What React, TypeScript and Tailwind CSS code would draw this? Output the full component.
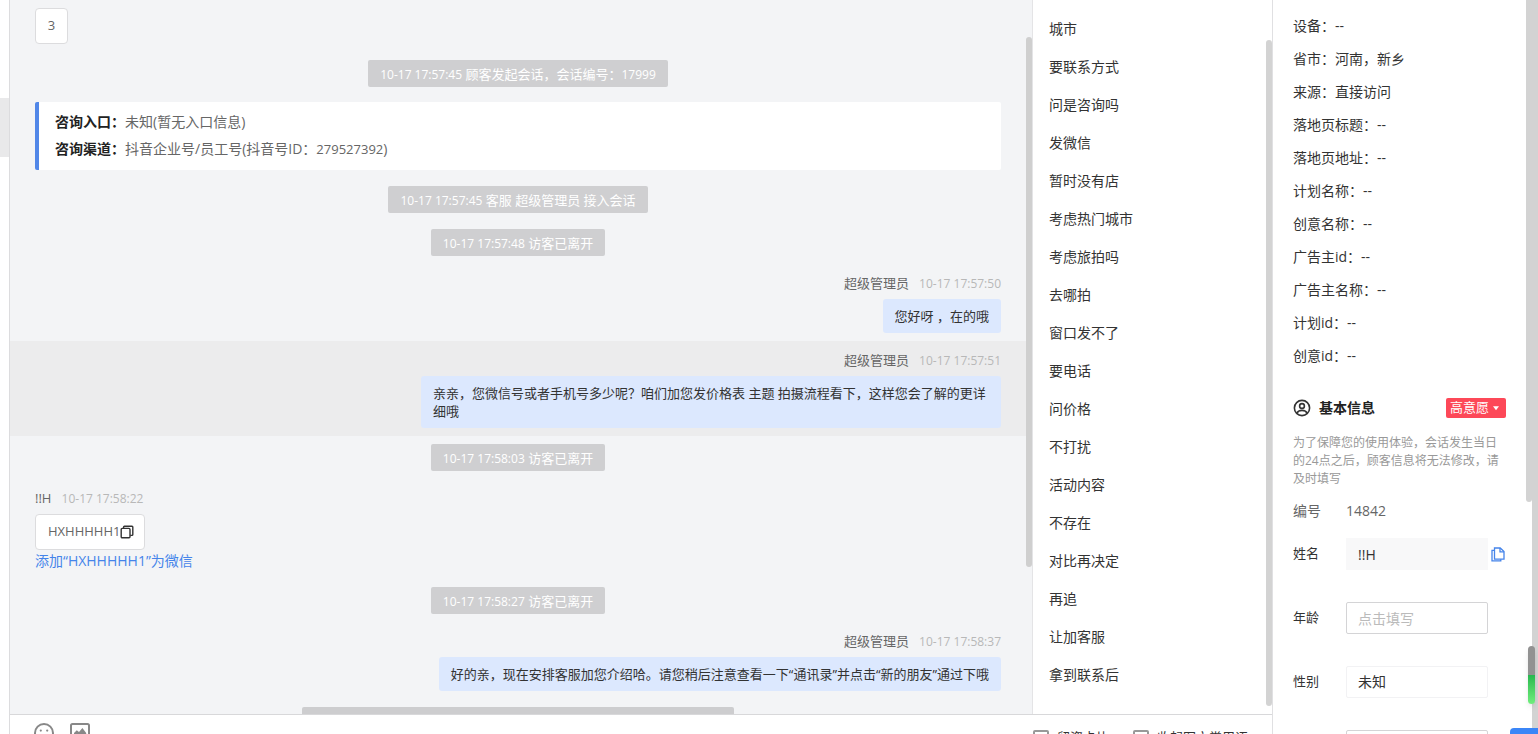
import type { ReactNode } from "react";

const quickReplies = [
  "城市", "要联系方式", "问是咨询吗", "发微信", "暂时没有店", "考虑热门城市",
  "考虑旅拍吗", "去哪拍", "窗口发不了", "要电话", "问价格", "不打扰",
  "活动内容", "不存在", "对比再决定", "再追", "让加客服", "拿到联系后",
];

const visitorInfo: [string, string][] = [
  ["设备", "--"],
  ["省市", "河南，新乡"],
  ["来源", "直接访问"],
  ["落地页标题", "--"],
  ["落地页地址", "--"],
  ["计划名称", "--"],
  ["创意名称", "--"],
  ["广告主id", "--"],
  ["广告主名称", "--"],
  ["计划id", "--"],
  ["创意id", "--"],
];

function Notice({ time, children }: { time: string; children: ReactNode }) {
  return (
    <div className="flex justify-center py-2">
      <p className="h-[27px] rounded-xs bg-[#cfcfd1] px-3 text-[13px] leading-[28px] text-white">
        <time className="text-xs">{time}</time> {children}
      </p>
    </div>
  );
}

function Sent({ time, active, children }: { time: string; active?: boolean; children: ReactNode }) {
  return (
    <div className={active ? "flex flex-col items-end bg-[#ececed] px-[25px] py-2" : "flex flex-col items-end px-[25px] py-2"}>
      <div className="mb-[3px] flex h-6 items-center gap-2 text-[13px] text-[#666]">
        超级管理员 <time className="w-21 text-right text-xs text-[#b8b8b8]">{time}</time>
      </div>
      <p className="max-w-[580px] rounded-[3px] bg-[#dce8fe] px-3 py-2 text-[13px] leading-[18px] text-[#333]">{children}</p>
    </div>
  );
}

function CopyIcon() {
  return (
    <svg viewBox="0 0 14 14" className="size-3.5" fill="none" stroke="#333" strokeWidth="1.4">
      <rect x="1.2" y="3.4" width="8.8" height="9.4" rx="1" />
      <path d="M3.6 3.2V2a.8.8 0 0 1 .8-.8H12a.8.8 0 0 1 .8.8v7.6a.8.8 0 0 1-.8.8h-1.8" />
    </svg>
  );
}

function Field({ id, label, children }: { id: string; label: string; children: ReactNode }) {
  return (
    <div className="flex h-8 items-center">
      <label htmlFor={id} className="w-[53px] shrink-0 text-[13px]">{label}</label>
      {children}
    </div>
  );
}

function Chat() {
  return (
    <main className="flex min-w-0 flex-1 bg-[#f3f4f6]">
      <div className="relative min-w-0 flex-1 overflow-hidden">
        <div className="px-[25px] pt-2">
          <p className="mb-2 flex h-9 w-[33px] items-center justify-center rounded-sm border border-[#dcdcde] bg-white text-[13px] text-[#666]">3</p>
        </div>
        <Notice time="10-17 17:57:45">顾客发起会话，会话编号：<span className="text-xs">17999</span></Notice>
        <div className="px-[25px] pt-[7px] pb-2">
          <dl className="h-[68px] rounded-xs border-l-4 border-[#5187e8] bg-white px-4 py-1.5 text-sm leading-[27px]">
            <div className="flex">
              <dt className="font-bold text-[#222]">咨询入口：</dt>
              <dd className="text-[#666]">未知(暂无入口信息)</dd>
            </div>
            <div className="flex">
              <dt className="font-bold text-[#222]">咨询渠道：</dt>
              <dd className="text-[#666]">抖音企业号/员工号(抖音号ID：<span className="text-[13px]">279527392</span>)</dd>
            </div>
          </dl>
        </div>
        <Notice time="10-17 17:57:45">客服 超级管理员 接入会话</Notice>
        <Notice time="10-17 17:57:48">访客已离开</Notice>
        <Sent time="10-17 17:57:50">您好呀 ，在的哦</Sent>
        <Sent time="10-17 17:57:51" active>
          亲亲，您微信号或者手机号多少呢？咱们加您发价格表 主题 拍摄流程看下，这样您会了解的更详细哦
        </Sent>
        <Notice time="10-17 17:58:03">访客已离开</Notice>
        <div className="flex flex-col items-start px-[25px] py-2">
          <div className="mb-[3px] flex h-6 items-center gap-2 text-[13px] text-[#666]">
            !!H <time className="w-21 text-right text-xs text-[#b8b8b8]">10-17 17:58:22</time>
          </div>
          <p className="flex h-9 items-center rounded-sm border border-[#dcdcde] bg-white pr-2.5 pl-3 text-[13px] text-[#666]">
            HXHHHHH1
            <button type="button" aria-label="复制"><CopyIcon /></button>
          </p>
          <a href="#wechat" className="text-sm leading-[21px] text-[#4584ea]">添加“HXHHHHH1”为微信</a>
        </div>
        <Notice time="10-17 17:58:27">访客已离开</Notice>
        <Sent time="10-17 17:58:37">好的亲，现在安排客服加您介绍哈。请您稍后注意查看一下“通讯录”并点击“新的朋友”通过下哦</Sent>
        <div className="absolute bottom-0 left-[292px] h-[7px] w-[432px] rounded-t-xs bg-[#cdcdcf]" />
      </div>
      <div className="w-1.5 shrink-0 pt-[37px]">
        <div className="h-[530px] rounded-full bg-[#cfcfcf]" />
      </div>
    </main>
  );
}

function QuickReplies() {
  return (
    <aside className="flex w-60 shrink-0 border-l border-[#e4e4e6] bg-white">
      <ul className="flex-1 pt-2.5 pl-4 text-sm leading-[38px] text-[#333]">
        {quickReplies.map((t) => <li key={t}>{t}</li>)}
      </ul>
      <div className="w-1.5 pt-10 pb-2">
        <div className="h-full rounded-full bg-[#d3d3d3]" />
      </div>
    </aside>
  );
}

function Composer() {
  return (
    <footer className="flex h-5 shrink-0 items-start justify-between border-t border-[#d8d8da] bg-white px-6">
      <div className="flex gap-4 pt-2">
        <button type="button" aria-label="表情">
          <svg viewBox="0 0 20 20" className="size-5" fill="none" stroke="#888" strokeWidth="2">
            <circle cx="10" cy="10" r="9" />
            <path d="M5.5 11.5a4.6 4.6 0 0 0 9 0" />
            <circle cx="6.8" cy="7.6" r="1.1" fill="#888" stroke="none" />
            <circle cx="13.2" cy="7.6" r="1.1" fill="#888" stroke="none" />
          </svg>
        </button>
        <button type="button" aria-label="图片">
          <svg viewBox="0 0 20 20" className="size-5" fill="none" stroke="#888" strokeWidth="2">
            <rect x="1" y="1" width="18" height="17" rx="1.5" />
            <path d="M4 14v-4l2.800-2.800 2.200 1.800L12.400 5l3.800 5v4z" fill="#888" stroke="none" />
          </svg>
        </button>
      </div>
      <div className="flex gap-6 pt-[13px] text-[13px] text-[#333]">
        <label className="flex items-center gap-2">
          <input type="checkbox" className="size-4 appearance-none rounded-xs border-2 border-[#999] bg-white" />
          留资卡片
        </label>
        <label className="flex items-center gap-2">
          <input type="checkbox" className="size-4 appearance-none rounded-xs border-2 border-[#999] bg-white" />
          收起图文常用语
        </label>
      </div>
    </footer>
  );
}

function VisitorPanel() {
  return (
    <aside className="flex w-[266px] shrink-0 border-l border-[#e0e0e2] bg-white text-[#333]">
      <div className="min-w-0 flex-1 pt-[9px] pr-5 pl-5">
        <dl className="text-sm leading-[33px]">
          {visitorInfo.map(([k, v]) => (
            <div key={k} className="flex"><dt>{k}：</dt><dd>{v}</dd></div>
          ))}
        </dl>
        <div className="mt-[26px] flex h-5 items-center">
          <svg viewBox="0 0 18 18" className="size-[18px]" fill="none" stroke="#333" strokeWidth="1.6">
            <circle cx="9" cy="9" r="7.6" />
            <circle cx="9" cy="7" r="2.4" />
            <path d="M3.8 14.4c.8-2 2.8-3 5.2-3s4.4 1 5.2 3" />
          </svg>
          <h2 className="ml-2 flex-1 text-sm font-bold text-[#222]">基本信息</h2>
          <button type="button" className="flex h-5 w-[60px] items-center rounded-xs bg-[#fd4858] pl-1 text-[13px] text-white">
            高意愿
            <svg viewBox="0 0 8 8" className="ml-[3px] size-2" fill="#fff"><path d="M1 2.200h6L4 6.200z" /></svg>
          </button>
        </div>
        <p className="mt-4 text-xs leading-[18px] text-[#999]">
          为了保障您的使用体验，会话发生当日的24点之后，顾客信息将无法修改，请及时填写
        </p>
        <div className="mt-3 flex h-[22px] items-center text-sm text-[#666]">
          <span className="w-[53px]">编号</span>
          <span>14842</span>
        </div>
        <form className="mt-4 flex flex-col gap-8">
          <Field id="name" label="姓名">
            <input id="name" readOnly defaultValue="!!H" className="h-8 w-[142px] bg-[#f8f8f9] px-3 text-sm outline-none" />
            <button type="button" aria-label="复制姓名" className="ml-[3px]">
              <svg viewBox="0 0 14 15" className="h-[15px] w-3.5" fill="none" stroke="#4584ea" strokeWidth="1.3">
                <path d="M3.500 3.300H1v10.500h8.800v-1.600" />
                <path d="M3.500 1h5.700l3.800 3.600v7.600H3.500z" />
                <path d="M9 1v3.800h4" />
              </svg>
            </button>
          </Field>
          <Field id="age" label="年龄">
            <input id="age" placeholder="点击填写" className="h-8 w-[142px] rounded-xs border border-[#d4d4d6] px-[11px] text-sm outline-none placeholder:text-[#bbb]" />
          </Field>
          <Field id="gender" label="性别">
            <select id="gender" className="h-8 w-[142px] appearance-none rounded-xs border border-[#f2f2f4] bg-white px-[11px] text-sm outline-none">
              <option>未知</option>
            </select>
          </Field>
          <input aria-label="电话" className="ml-[53px] h-8 w-[142px] rounded-xs border border-[#d4d4d6] px-[11px] text-sm outline-none" />
        </form>
      </div>
      <div className="w-1.5 shrink-0">
        <div className="h-[502px] rounded-b-full bg-[#d3d3d3]" />
      </div>
      <div className="w-1.5 shrink-0 bg-[#d3d3d3]" />
    </aside>
  );
}

export default function App() {
  return (
    <div className="relative flex h-screen overflow-hidden bg-white font-['Open_Sans','Noto_Sans_CJK_SC',sans-serif]">
      <div className="w-2.5 shrink-0 border-r border-[#dcdcde] pt-[98px]">
        <div className="h-[59px] bg-[#e9e9ea]" />
      </div>
      <div className="flex min-w-0 flex-1 flex-col">
        <div className="flex min-h-0 flex-1">
          <Chat />
          <QuickReplies />
        </div>
        <Composer />
      </div>
      <VisitorPanel />
      <div className="absolute right-[3px] bottom-[30px] flex h-[58px] w-[7px] flex-col overflow-hidden rounded-full shadow-md">
        <div className="flex-1 bg-[#929292]" />
        <div className="flex-1 bg-linear-to-b from-[#25b84f] to-[#6fee7d]" />
      </div>
      <div className="absolute right-0 bottom-0 h-1.5 w-7 rounded-tl-sm bg-[#3b86f7] shadow-lg" />
    </div>
  );
}
